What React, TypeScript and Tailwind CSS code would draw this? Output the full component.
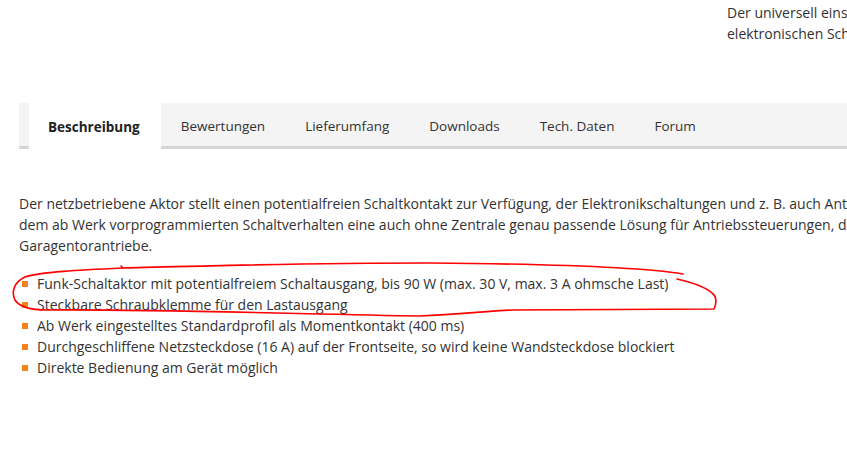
const tabs = ["Beschreibung", "Bewertungen", "Lieferumfang", "Downloads", "Tech. Daten", "Forum"];

const features = [
  "Funk-Schaltaktor mit potentialfreiem Schaltausgang, bis 90 W (max. 30 V, max. 3 A ohmsche Last)",
  "Steckbare Schraubklemme für den Lastausgang",
  "Ab Werk eingestelltes Standardprofil als Momentkontakt (400 ms)",
  "Durchgeschliffene Netzsteckdose (16 A) auf der Frontseite, so wird keine Wandsteckdose blockiert",
  "Direkte Bedienung am Gerät möglich",
];

function Markup() {
  return (
    <svg className="pointer-events-none absolute left-0 top-0" width="847" height="458" viewBox="0 0 847 458" fill="none">
      <path
        d="M123,268 C200,266 300,263 430,263 C550,264 640,267 683,274"
        stroke="#ff0000"
        strokeWidth="1.6"
        strokeLinecap="round"
      />
      <path
        d="M123,268 L121,266 M123,268 C80,270 40,272 25,277 C14,282 11,292 15,300 C20,308 35,310 47,310 C150,309 300,314 420,316 C460,314 490,311 513,310 L714,309 C717,302 716,296 712,293 C705,287 695,283 677,279"
        stroke="#ff0000"
        strokeWidth="1.6"
        strokeLinecap="round"
        strokeLinejoin="round"
      />
    </svg>
  );
}

export default function App() {
  return (
    <div className="relative h-[458px] w-[847px] overflow-hidden bg-white font-['Open_Sans',sans-serif] text-[14px] leading-[21px] text-[#333]">
      <div className="flex h-[103px]">
        <div className="w-[727px] shrink-0" />
        <div className="whitespace-nowrap pt-[2px]">
          <div>Der universell einsetzbare Funk-Schaltaktor</div>
          <div>elektronischen Schaltungen</div>
        </div>
      </div>

      <div className="w-[1100px] pl-[19px]">
        <nav className="flex h-[46px] border-b-[3px] border-[#d6d6d6] bg-[#f4f4f4] pl-[10px] text-[13.5px]">
          {tabs.map((t, i) => (
            <div
              key={t}
              className={
                i === 0
                  ? "-mb-[3px] flex h-[46px] items-center bg-white pl-[19px] pr-[21px] pt-[3px] font-bold text-[#222]"
                  : "flex items-center px-5 pt-[3px] text-[#333]"
              }
            >
              {t}
            </div>
          ))}
        </nav>

        <div className="mt-[44px] whitespace-nowrap">
          <div>Der netzbetriebene Aktor stellt einen potentialfreien Schaltkontakt zur Verfügung, der Elektronikschaltungen und z. B. auch Antriebe ansteuern kann. Mit</div>
          <div>dem ab Werk vorprogrammierten Schaltverhalten eine auch ohne Zentrale genau passende Lösung für Antriebssteuerungen, die z. B. für Tür- oder</div>
          <div>Garagentorantriebe.</div>
        </div>

        <ul className="mt-[17px] whitespace-nowrap">
          {features.map((f) => (
            <li key={f} className="flex items-center">
              <span className="ml-[3px] mr-[9px] h-[6px] w-[6px] bg-[#f5821f]" />
              {f}
            </li>
          ))}
        </ul>
      </div>

      <Markup />
    </div>
  );
}
